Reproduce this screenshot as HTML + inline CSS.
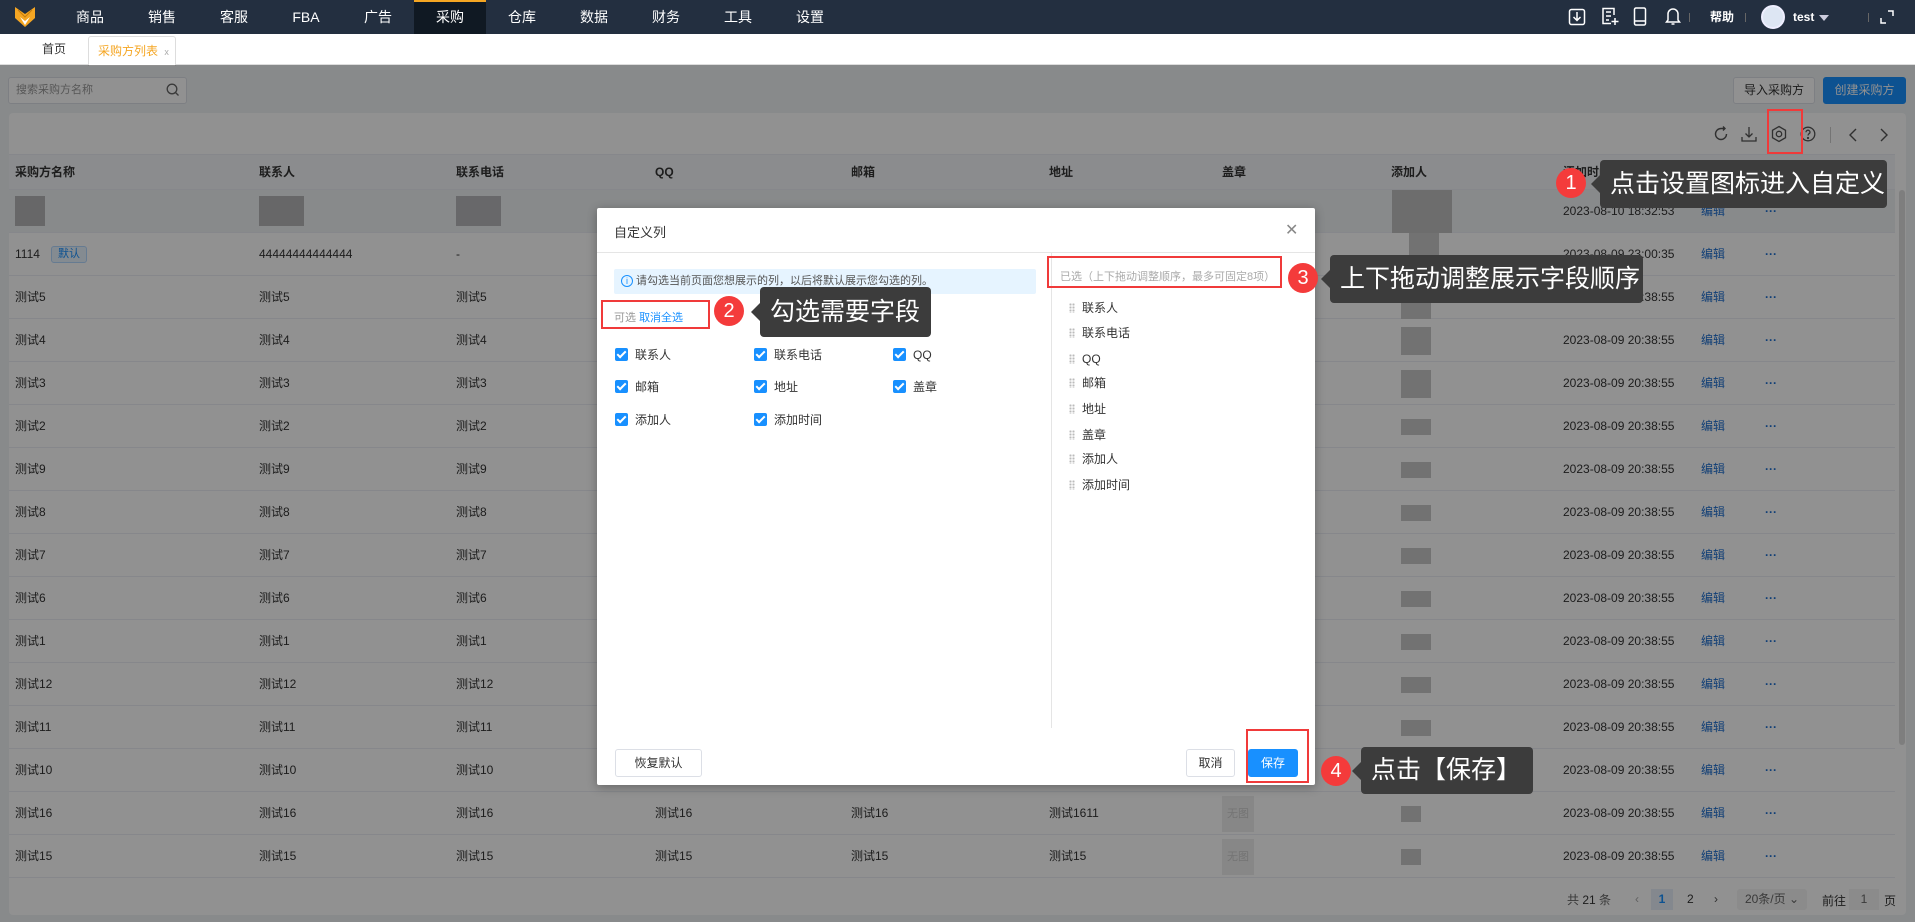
<!DOCTYPE html>
<html><head><meta charset="utf-8"><style>
*{box-sizing:border-box;margin:0;padding:0}
body{width:1915px;height:922px;overflow:hidden;position:relative;background:#f0f2f5;font-family:"Liberation Sans","Noto Sans CJK SC",sans-serif;font-size:12px;color:#333}
.a{position:absolute;white-space:nowrap}
.top{left:0;top:0;width:1915px;height:34px;background:#232f40}
.nav{top:0;height:34px;line-height:34px;color:#fff;font-size:14px;transform:translateX(-50%)}
.tabs{left:0;top:34px;width:1915px;height:31px;background:#fff;border-bottom:1px solid #ddd}
.card{left:9px;top:113px;width:1897px;height:802px;background:#fff;border-radius:4px}
.row{left:9px;width:1886px;height:43px;border-bottom:1px solid #ebeef5;background:#fff}
.c{position:absolute;top:0;line-height:43px;font-size:12px;color:#333}
.ed{color:#1e6fd0}
.blk{position:absolute;background:#c8c8c8}
.ov{left:0;top:65px;width:1915px;height:857px;background:rgba(0,0,0,.43)}
.dlg{left:597px;top:208px;width:718px;height:577px;background:#fff;border-radius:2px;box-shadow:0 2px 10px rgba(0,0,0,.3)}
.cb{position:absolute;width:13px;height:13px;background:#1890ff;border-radius:2px}
.cb:after{content:"";position:absolute;left:4px;top:1px;width:3px;height:7px;border:solid #fff;border-width:0 2px 2px 0;transform:rotate(45deg)}
.lbl{position:absolute;font-size:12px;color:#333;line-height:14px}
.red{position:absolute;border:2px solid #f03a3a}
.num{position:absolute;width:30px;height:30px;border-radius:50%;background:#f43b3b;color:#fff;font-size:20px;line-height:30px;text-align:center;font-family:"Liberation Sans",sans-serif}
.tip{position:absolute;background:#3c3c3c;color:#fff;font-size:25px;border-radius:4px;padding-left:10px}
.tip:before{content:"";position:absolute;left:-9px;top:50%;margin-top:-9px;border:9px solid transparent;border-left:0;border-right-color:#3c3c3c}
.btn{position:absolute;border:1px solid #dcdfe6;border-radius:3px;background:#fff;text-align:center;font-size:12px;color:#333}
.drag{position:absolute;left:1069px;width:6px;height:10px;background:radial-gradient(circle,#bbb 1px,transparent 1.2px) 0 0/3px 3px}
</style></head><body>
<div class="a top"></div>
<svg class="a" style="left:14px;top:6px" width="22" height="22" viewBox="0 0 22 22"><path d="M1 1 L11 8 L21 1 L21 12 L11 21 L1 12Z" fill="#f5a623"/><path d="M6 11 L11 15 L16 11 L11 19Z" fill="#fff"/><path d="M4 4 L11 11 L18 4" fill="none" stroke="#c97d0c" stroke-width="1"/></svg>
<div class="a" style="left:414px;top:0;width:72px;height:34px;background:#101923;border-top:2px solid #f5a623"></div>
<div class="a nav" style="left:90px">商品</div><div class="a nav" style="left:162px">销售</div><div class="a nav" style="left:234px">客服</div><div class="a nav" style="left:306px">FBA</div><div class="a nav" style="left:378px">广告</div><div class="a nav" style="left:450px">采购</div><div class="a nav" style="left:522px">仓库</div><div class="a nav" style="left:594px">数据</div><div class="a nav" style="left:666px">财务</div><div class="a nav" style="left:738px">工具</div><div class="a nav" style="left:810px">设置</div>
<svg class="a" style="left:1568px;top:8px" width="18" height="18" viewBox="0 0 18 18" fill="none" stroke="#fff" stroke-width="1.5"><rect x="1.5" y="1.5" width="15" height="15" rx="2"/><path d="M9 4v8M5.5 9l3.5 3.5 3.5-3.5"/></svg>
<svg class="a" style="left:1601px;top:7px" width="18" height="19" viewBox="0 0 18 19" fill="none" stroke="#fff" stroke-width="1.5"><path d="M13 8V1.5H2v15h8M5 5h5M5 9h5M5 13h3M14 11v7M10.5 14.5h7"/></svg>
<svg class="a" style="left:1633px;top:7px" width="14" height="19" viewBox="0 0 14 19" fill="none" stroke="#fff" stroke-width="1.5"><rect x="1.5" y="1" width="11" height="17" rx="1.5"/><path d="M2 14h10"/></svg>
<svg class="a" style="left:1665px;top:6px" width="16" height="20" viewBox="0 0 16 20" fill="none" stroke="#fff" stroke-width="1.5"><path d="M3 14V8a5 5 0 0110 0v6l1.5 2h-13z M6.5 18h3"/></svg>
<div class="a" style="left:1689px;top:13px;width:1px;height:9px;background:#666"></div>
<div class="a" style="left:1710px;top:0;line-height:34px;color:#fff;font-size:12px;font-weight:bold">帮助</div>
<div class="a" style="left:1745px;top:13px;width:1px;height:9px;background:#666"></div>
<div class="a" style="left:1761px;top:5px;width:24px;height:24px;border-radius:50%;background:#dde6f3;border:2px solid #eef"></div>
<div class="a" style="left:1793px;top:0;line-height:34px;color:#fff;font-size:12px;font-weight:bold">test</div>
<div class="a" style="left:1819px;top:15px;border:5px solid transparent;border-top:6px solid #ccd;"></div>
<div class="a" style="left:1868px;top:13px;width:1px;height:9px;background:#666"></div>
<svg class="a" style="left:1880px;top:10px" width="14" height="14" viewBox="0 0 14 14" fill="none" stroke="#fff" stroke-width="1.5"><path d="M8 1h5v5M1 8v5h5"/></svg>
<div class="a tabs"></div>
<div class="a" style="left:42px;top:34px;line-height:31px;font-size:12px;color:#333">首页</div>
<div class="a" style="left:88px;top:36px;width:88px;height:30px;background:#fff;border:1px solid #ddd;border-bottom:none;border-radius:3px 3px 0 0;line-height:28px;padding-left:9px;color:#f5a623;font-size:12px">采购方列表 <span style="color:#aaa;font-size:9px;margin-left:3px">x</span></div>

<div class="a" style="left:8px;top:77px;width:179px;height:27px;background:#fff;border:1px solid #dcdfe6;border-radius:3px;line-height:25px;padding-left:7px;color:#999;font-size:11px">搜索采购方名称</div>
<svg class="a" style="left:166px;top:83px" width="14" height="14" viewBox="0 0 14 14" fill="none" stroke="#666" stroke-width="1.3"><circle cx="6" cy="6" r="4.8"/><path d="M9.5 9.5l3 3"/></svg>
<div class="btn" style="left:1733px;top:77px;width:82px;height:27px;line-height:25px">导入采购方</div>
<div class="btn" style="left:1823px;top:77px;width:83px;height:27px;line-height:25px;background:#1890ff;border-color:#1890ff;color:#fff">创建采购方</div>
<div class="a card"></div>
<svg class="a" style="left:1713px;top:126px" width="16" height="16" viewBox="0 0 16 16" fill="none" stroke="#555" stroke-width="1.4"><path d="M13.5 8A5.5 5.5 0 118 2.5h3M10 0.5l2 2-2 2"/></svg>
<svg class="a" style="left:1741px;top:126px" width="16" height="16" viewBox="0 0 16 16" fill="none" stroke="#555" stroke-width="1.3"><path d="M8 1v10M4.5 7.5L8 11l3.5-3.5M1 11v4h14v-4"/></svg>
<svg class="a" style="left:1770px;top:125px" width="18" height="18" viewBox="0 0 18 18" fill="none" stroke="#555" stroke-width="1.3"><path d="M9 1.5l6.5 3.75v7.5L9 16.5l-6.5-3.75v-7.5z"/><circle cx="9" cy="9" r="2.7"/></svg>
<svg class="a" style="left:1800px;top:126px" width="16" height="16" viewBox="0 0 16 16" fill="none" stroke="#555" stroke-width="1.3"><circle cx="8" cy="8" r="6.8"/><path d="M6 6.2a2 2 0 114 0c0 1.5-2 1.5-2 3.3"/><circle cx="8" cy="12" r=".5" fill="#555"/></svg>
<div class="a" style="left:1830px;top:127px;width:1px;height:16px;background:#ccc"></div>
<svg class="a" style="left:1848px;top:128px" width="10" height="14" viewBox="0 0 10 14" fill="none" stroke="#555" stroke-width="1.4"><path d="M8 1L2 7l6 6"/></svg>
<svg class="a" style="left:1879px;top:128px" width="10" height="14" viewBox="0 0 10 14" fill="none" stroke="#555" stroke-width="1.4"><path d="M2 1l6 6-6 6"/></svg>

<div class="a" style="left:9px;top:154px;width:1886px;height:36px;background:#f5f7fa;border-top:1px solid #ebeef5;border-bottom:1px solid #ebeef5;font-weight:bold;font-size:12px;color:#333">
<span class="c" style="left:6px;line-height:34px">采购方名称</span><span class="c" style="left:250px;line-height:34px">联系人</span><span class="c" style="left:447px;line-height:34px">联系电话</span><span class="c" style="left:646px;line-height:34px">QQ</span><span class="c" style="left:842px;line-height:34px">邮箱</span><span class="c" style="left:1040px;line-height:34px">地址</span><span class="c" style="left:1213px;line-height:34px">盖章</span><span class="c" style="left:1382px;line-height:34px">添加人</span><span class="c" style="left:1554px;line-height:34px">添加时间</span><span class="c" style="left:1696px;line-height:34px">操作</span></div>

<div class="a row" style="top:190px;background:#f0f2f5"><div class="blk" style="left:6px;top:6px;width:30px;height:30px;background:#b5b5b8"></div><div class="blk" style="left:250px;top:6px;width:45px;height:30px;background:#b5b5b8"></div><div class="blk" style="left:447px;top:6px;width:45px;height:30px;background:#b8b8bb"></div><div class="blk" style="left:1383px;top:0;width:60px;height:43px;background:#c0c0c0"></div><span class="c" style="left:1554px">2023-08-10 18:32:53</span><span class="c ed" style="left:1692px">编辑</span><span class="c ed" style="left:1756px;font-weight:bold">···</span></div>
<div class="a row" style="top:233px"><span class="c" style="left:6px">1114</span><span class="a" style="left:42px;top:13px;height:17px;line-height:15px;padding:0 6px;background:#e8f4ff;border:1px solid #b3d8ff;border-radius:3px;color:#1890ff;font-size:11px">默认</span><span class="c" style="left:250px">44444444444444</span><span class="c" style="left:447px">-</span><div class="blk" style="left:1400px;top:0;width:30px;height:43px"></div><span class="c" style="left:1554px">2023-08-09 23:00:35</span><span class="c ed" style="left:1692px">编辑</span><span class="c ed" style="left:1756px;font-weight:bold">···</span></div>
<div class="a row" style="top:276px"><span class="c" style="left:6px">测试5</span><span class="c" style="left:250px">测试5</span><span class="c" style="left:447px">测试5</span><div class="blk" style="left:1392px;top:0;width:30px;height:43px"></div><span class="c" style="left:1554px">2023-08-09 20:38:55</span><span class="c ed" style="left:1692px">编辑</span><span class="c ed" style="left:1756px;font-weight:bold">···</span></div>
<div class="a row" style="top:319px"><span class="c" style="left:6px">测试4</span><span class="c" style="left:250px">测试4</span><span class="c" style="left:447px">测试4</span><div class="blk" style="left:1392px;top:8px;width:30px;height:28px"></div><span class="c" style="left:1554px">2023-08-09 20:38:55</span><span class="c ed" style="left:1692px">编辑</span><span class="c ed" style="left:1756px;font-weight:bold">···</span></div>
<div class="a row" style="top:362px"><span class="c" style="left:6px">测试3</span><span class="c" style="left:250px">测试3</span><span class="c" style="left:447px">测试3</span><div class="blk" style="left:1392px;top:8px;width:30px;height:28px"></div><span class="c" style="left:1554px">2023-08-09 20:38:55</span><span class="c ed" style="left:1692px">编辑</span><span class="c ed" style="left:1756px;font-weight:bold">···</span></div>
<div class="a row" style="top:405px"><span class="c" style="left:6px">测试2</span><span class="c" style="left:250px">测试2</span><span class="c" style="left:447px">测试2</span><div class="blk" style="left:1392px;top:14px;width:30px;height:16px"></div><span class="c" style="left:1554px">2023-08-09 20:38:55</span><span class="c ed" style="left:1692px">编辑</span><span class="c ed" style="left:1756px;font-weight:bold">···</span></div>
<div class="a row" style="top:448px"><span class="c" style="left:6px">测试9</span><span class="c" style="left:250px">测试9</span><span class="c" style="left:447px">测试9</span><div class="blk" style="left:1392px;top:14px;width:30px;height:16px"></div><span class="c" style="left:1554px">2023-08-09 20:38:55</span><span class="c ed" style="left:1692px">编辑</span><span class="c ed" style="left:1756px;font-weight:bold">···</span></div>
<div class="a row" style="top:491px"><span class="c" style="left:6px">测试8</span><span class="c" style="left:250px">测试8</span><span class="c" style="left:447px">测试8</span><div class="blk" style="left:1392px;top:14px;width:30px;height:16px"></div><span class="c" style="left:1554px">2023-08-09 20:38:55</span><span class="c ed" style="left:1692px">编辑</span><span class="c ed" style="left:1756px;font-weight:bold">···</span></div>
<div class="a row" style="top:534px"><span class="c" style="left:6px">测试7</span><span class="c" style="left:250px">测试7</span><span class="c" style="left:447px">测试7</span><div class="blk" style="left:1392px;top:14px;width:30px;height:16px"></div><span class="c" style="left:1554px">2023-08-09 20:38:55</span><span class="c ed" style="left:1692px">编辑</span><span class="c ed" style="left:1756px;font-weight:bold">···</span></div>
<div class="a row" style="top:577px"><span class="c" style="left:6px">测试6</span><span class="c" style="left:250px">测试6</span><span class="c" style="left:447px">测试6</span><div class="blk" style="left:1392px;top:14px;width:30px;height:16px"></div><span class="c" style="left:1554px">2023-08-09 20:38:55</span><span class="c ed" style="left:1692px">编辑</span><span class="c ed" style="left:1756px;font-weight:bold">···</span></div>
<div class="a row" style="top:620px"><span class="c" style="left:6px">测试1</span><span class="c" style="left:250px">测试1</span><span class="c" style="left:447px">测试1</span><div class="blk" style="left:1392px;top:14px;width:30px;height:16px"></div><span class="c" style="left:1554px">2023-08-09 20:38:55</span><span class="c ed" style="left:1692px">编辑</span><span class="c ed" style="left:1756px;font-weight:bold">···</span></div>
<div class="a row" style="top:663px"><span class="c" style="left:6px">测试12</span><span class="c" style="left:250px">测试12</span><span class="c" style="left:447px">测试12</span><div class="blk" style="left:1392px;top:14px;width:30px;height:16px"></div><span class="c" style="left:1554px">2023-08-09 20:38:55</span><span class="c ed" style="left:1692px">编辑</span><span class="c ed" style="left:1756px;font-weight:bold">···</span></div>
<div class="a row" style="top:706px"><span class="c" style="left:6px">测试11</span><span class="c" style="left:250px">测试11</span><span class="c" style="left:447px">测试11</span><div class="blk" style="left:1392px;top:14px;width:30px;height:16px"></div><span class="c" style="left:1554px">2023-08-09 20:38:55</span><span class="c ed" style="left:1692px">编辑</span><span class="c ed" style="left:1756px;font-weight:bold">···</span></div>
<div class="a row" style="top:749px"><span class="c" style="left:6px">测试10</span><span class="c" style="left:250px">测试10</span><span class="c" style="left:447px">测试10</span><div class="blk" style="left:1392px;top:14px;width:30px;height:16px"></div><span class="c" style="left:1554px">2023-08-09 20:38:55</span><span class="c ed" style="left:1692px">编辑</span><span class="c ed" style="left:1756px;font-weight:bold">···</span></div>
<div class="a row" style="top:792px"><span class="c" style="left:6px">测试16</span><span class="c" style="left:250px">测试16</span><span class="c" style="left:447px">测试16</span><span class="c" style="left:646px">测试16</span><span class="c" style="left:842px">测试16</span><span class="c" style="left:1040px">测试1611</span><div class="blk" style="left:1213px;top:4px;width:32px;height:36px;background:#eee;color:#ccc;font-size:11px;line-height:36px;text-align:center">无图</div><div class="blk" style="left:1392px;top:14px;width:20px;height:16px"></div><span class="c" style="left:1554px">2023-08-09 20:38:55</span><span class="c ed" style="left:1692px">编辑</span><span class="c ed" style="left:1756px;font-weight:bold">···</span></div>
<div class="a row" style="top:835px"><span class="c" style="left:6px">测试15</span><span class="c" style="left:250px">测试15</span><span class="c" style="left:447px">测试15</span><span class="c" style="left:646px">测试15</span><span class="c" style="left:842px">测试15</span><span class="c" style="left:1040px">测试15</span><div class="blk" style="left:1213px;top:4px;width:32px;height:36px;background:#eee;color:#ccc;font-size:11px;line-height:36px;text-align:center">无图</div><div class="blk" style="left:1392px;top:14px;width:20px;height:16px"></div><span class="c" style="left:1554px">2023-08-09 20:38:55</span><span class="c ed" style="left:1692px">编辑</span><span class="c ed" style="left:1756px;font-weight:bold">···</span></div>
<div class="a" style="left:1899px;top:190px;width:6px;height:555px;background:#ddd;border-radius:3px"></div>

<div class="a" style="left:1567px;top:892px;font-size:12px;color:#666;line-height:16px">共 <b style="color:#333;font-weight:normal">21</b> 条</div>
<div class="a" style="left:1635px;top:892px;color:#aaa">‹</div>
<div class="a" style="left:1651px;top:889px;width:22px;height:21px;background:#e8f0fa;color:#1890ff;font-weight:bold;text-align:center;line-height:21px">1</div>
<div class="a" style="left:1687px;top:892px;color:#333">2</div>
<div class="a" style="left:1714px;top:892px;color:#555">›</div>
<div class="a" style="left:1737px;top:889px;width:70px;height:21px;background:#f4f4f4;border-radius:3px;line-height:21px;text-align:center;color:#666">20条/页 ⌄</div>
<div class="a" style="left:1822px;top:892px;color:#333">前往</div>
<div class="a" style="left:1849px;top:889px;width:30px;height:21px;background:#f4f4f4;text-align:center;line-height:21px;color:#666">1</div>
<div class="a" style="left:1884px;top:892px;color:#333">页</div>

<div class="a ov"></div>

<div class="a dlg">
<div class="a" style="left:17px;top:14px;font-size:13px;color:#333">自定义列</div>
<div class="a" style="left:688px;top:12px;font-size:16px;color:#888">✕</div>
<div class="a" style="left:0;top:44px;width:718px;height:1px;background:#e5e5e5"></div>
<div class="a" style="left:17px;top:61px;width:422px;height:25px;background:#e6f4ff;border-radius:2px;line-height:25px;padding-left:22px;font-size:11px;color:#555">请勾选当前页面您想展示的列，以后将默认展示您勾选的列。</div>
<div class="a" style="left:24px;top:67px;width:12px;height:12px;border:1px solid #1890ff;border-radius:50%;color:#1890ff;font-size:9px;line-height:10px;text-align:center">i</div>
<div class="a" style="left:454px;top:44px;width:1px;height:476px;background:#e5e5e5"></div>
<div class="a" style="left:17px;top:101px;font-size:11px;color:#999">可选 <span style="color:#1890ff">取消全选</span></div>
<div class="a" style="left:463px;top:60px;font-size:11px;color:#aaa">已选（上下拖动调整顺序，最多可固定8项）</div>
<div class="a" style="left:0;top:0">
<div class="cb" style="left:18px;top:140px"></div><div class="lbl" style="left:38px;top:140px">联系人</div>
<div class="cb" style="left:157px;top:140px"></div><div class="lbl" style="left:177px;top:140px">联系电话</div>
<div class="cb" style="left:296px;top:140px"></div><div class="lbl" style="left:316px;top:140px">QQ</div>
<div class="cb" style="left:18px;top:172px"></div><div class="lbl" style="left:38px;top:172px">邮箱</div>
<div class="cb" style="left:157px;top:172px"></div><div class="lbl" style="left:177px;top:172px">地址</div>
<div class="cb" style="left:296px;top:172px"></div><div class="lbl" style="left:316px;top:172px">盖章</div>
<div class="cb" style="left:18px;top:205px"></div><div class="lbl" style="left:38px;top:205px">添加人</div>
<div class="cb" style="left:157px;top:205px"></div><div class="lbl" style="left:177px;top:205px">添加时间</div>
</div>
<div class="lbl" style="left:485px;top:93px">联系人</div><div class="lbl" style="left:485px;top:118px">联系电话</div><div class="lbl" style="left:485px;top:144px">QQ</div><div class="lbl" style="left:485px;top:168px">邮箱</div><div class="lbl" style="left:485px;top:194px">地址</div><div class="lbl" style="left:485px;top:220px">盖章</div><div class="lbl" style="left:485px;top:244px">添加人</div><div class="lbl" style="left:485px;top:270px">添加时间</div>
<div class="drag" style="left:472px;top:95px"></div><div class="drag" style="left:472px;top:120px"></div><div class="drag" style="left:472px;top:146px"></div><div class="drag" style="left:472px;top:170px"></div><div class="drag" style="left:472px;top:196px"></div><div class="drag" style="left:472px;top:222px"></div><div class="drag" style="left:472px;top:246px"></div><div class="drag" style="left:472px;top:272px"></div>
<div class="btn" style="left:18px;top:541px;width:87px;height:28px;line-height:26px">恢复默认</div>
<div class="btn" style="left:589px;top:541px;width:49px;height:28px;line-height:26px">取消</div>
<div class="btn" style="left:651px;top:541px;width:50px;height:28px;line-height:26px;background:#1890ff;border-color:#1890ff;color:#fff">保存</div>
</div>

<div class="red" style="left:1767px;top:109px;width:36px;height:45px"></div>
<div class="red" style="left:601px;top:300px;width:109px;height:29px"></div>
<div class="red" style="left:1047px;top:256px;width:235px;height:32px"></div>
<div class="red" style="left:1246px;top:729px;width:63px;height:54px"></div>
<div class="num" style="left:1556px;top:168px">1</div>
<div class="num" style="left:714px;top:296px">2</div>
<div class="num" style="left:1288px;top:263px">3</div>
<div class="num" style="left:1321px;top:756px">4</div>
<div class="tip" style="left:1600px;top:160px;width:287px;height:48px;line-height:48px">点击设置图标进入自定义</div>
<div class="tip" style="left:760px;top:287px;width:171px;height:50px;line-height:50px">勾选需要字段</div>
<div class="tip" style="left:1330px;top:255px;width:313px;height:48px;line-height:48px">上下拖动调整展示字段顺序</div>
<div class="tip" style="left:1361px;top:747px;width:172px;height:47px;line-height:47px">点击【保存】</div>
</body></html>
